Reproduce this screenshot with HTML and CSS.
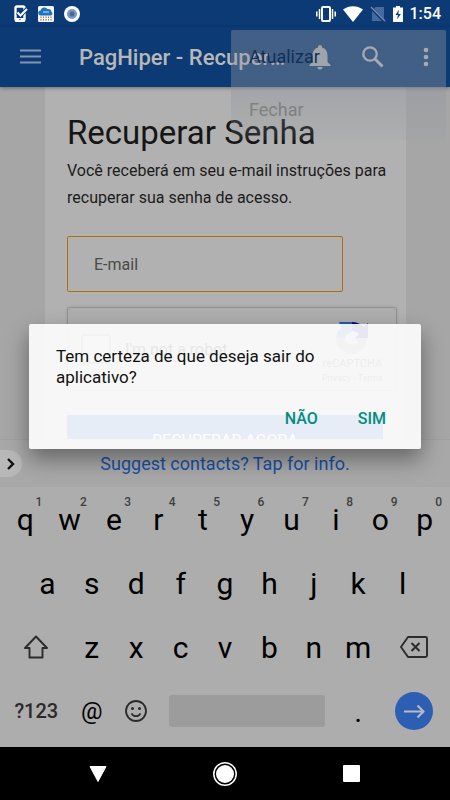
FILE: index.html
```html
<!DOCTYPE html>
<html lang="pt-BR">

<head>
    <title>PagHiper - Recuperar Senha</title>
    <meta charset="UTF-8">
    <meta name="viewport" content="width=device-width, initial-scale=1">
    <link rel="stylesheet" href="styles.css">
</head>

<body>
    <div class="screen">
        <div class="status-bar">
            <svg width="14" height="18" viewBox="0 0 14 18">
                <rect x="1.5" y="1.5" width="9" height="14" rx="1.5" fill="none" stroke="#fff" stroke-width="2.4" />
                <rect x="1" y="13" width="10" height="4" rx="1" fill="#fff" />
                <path d="M3.5 7.5l3 3L13 4" fill="none" stroke="#0c3a75" stroke-width="4" />
                <path d="M3.5 7.5l3 3L13 4" fill="none" stroke="#fff" stroke-width="2" />
                <circle cx="6" cy="14.5" r=".7" fill="#0c3a75" />
            </svg>
            <svg width="16" height="16" viewBox="0 0 16 16">
                <rect width="16" height="16" rx="1.5" fill="#f4f4f4" />
                <path d="M3 9.500a2.500 2.500 0 0 1-.5-5A4 4 0 0 1 9.500 3a3.200 3.200 0 0 1 4 3A1.900 1.900 0 0 1 13 9.500z" fill="#1c74bf" />
                <path d="M5 6h6" stroke="#8fc0e8" stroke-width="1.5" />
                <path d="M3 10.500v4M8 10.500v4M13 10.500v4" stroke="#c0504a" stroke-dasharray="1.500 1" />
                <path d="M5.500 10.500v4M10.500 10.500v4" stroke="#5a8f68" stroke-dasharray="1.500 1" />
            </svg>
            <svg width="16" height="16" viewBox="0 0 16 16">
                <circle cx="8" cy="8" r="8" fill="#fff" />
                <circle cx="8" cy="8" r="5" fill="#7d97ba" />
                <circle cx="8" cy="8" r="2.500" fill="#456a9c" />
            </svg>
            <div class="status-right">
                <svg width="20" height="16" viewBox="0 0 20 16">
                    <rect x="6" y="1" width="8" height="14" rx="1" fill="none" stroke="#fff" stroke-width="2" />
                    <path d="M3.500 3v10M.8 5.500v5M16.500 3v10M19.200 5.500v5" stroke="#fff" stroke-width="1.500" />
                </svg>
                <svg width="20" height="16" viewBox="0 0 20 16">
                    <path d="M0 3.500C6-1 14-1 20 3.500L10 16z" fill="#fff" />
                </svg>
                <svg width="16" height="16" viewBox="0 0 16 16">
                    <path d="M5.500 1H14v14H2V5z" fill="#466a9b" />
                    <path d="M0 1l15 15" stroke="#0c3a75" stroke-width="3" />
                    <path d="M1 1l14 14" stroke="#7891b5" stroke-width="1.300" />
                </svg>
                <svg width="10" height="16" viewBox="0 0 10 16">
                    <path d="M3 0h4v1.500h3V16H0V1.500h3z" fill="#fff" />
                    <path d="M6 3.500L2.500 9H5l-1 4.500L7.800 8H5.300z" fill="#0c3a75" />
                </svg>
                <span class="clock">1:54</span>
            </div>
        </div>

        <header class="app-bar">
            <button class="icon-button" aria-label="Menu">
                <svg width="21" height="16" viewBox="0 0 21 16">
                    <path d="M0 1.500h21M0 7.500h21M0 13.500h21" stroke="#8295ad" stroke-width="2" />
                </svg>
            </button>
            <div class="app-title">PagHiper - Recuperar Senha</div>
            <div class="app-actions">
                <button class="icon-button" aria-label="Notificações">
                    <svg width="22" height="26" viewBox="0 0 22 26">
                        <path d="M11 1a2 2 0 0 1 2 2v.6c3.700 1 5.500 4 5.500 8V18l3 3v1H.5v-1l3-3v-6.400c0-4 1.800-7 5.500-8V3a2 2 0 0 1 2-2zM8.500 23h5a2.500 2.500 0 0 1-5 0z" fill="#a9adb3" />
                    </svg>
                </button>
                <button class="icon-button" aria-label="Buscar">
                    <svg width="22" height="22" viewBox="0 0 22 22">
                        <circle cx="8" cy="8" r="6.700" fill="none" stroke="#b4b8bc" stroke-width="2.300" />
                        <path d="M13 13l7.500 7.500" stroke="#b4b8bc" stroke-width="3" />
                    </svg>
                </button>
                <button class="icon-button" aria-label="Mais opções">
                    <svg width="6" height="20" viewBox="0 0 6 20">
                        <circle cx="3" cy="3" r="2.300" fill="#b4b8bc" />
                        <circle cx="3" cy="10" r="2.300" fill="#b4b8bc" />
                        <circle cx="3" cy="17" r="2.300" fill="#b4b8bc" />
                    </svg>
                </button>
            </div>
        </header>

        <div class="popup-menu">
            <button class="popup-item popup-item-active">Atualizar</button>
            <button class="popup-item">Fechar</button>
        </div>

        <main class="content">
            <form class="card" onsubmit="return false;">
                <h1>Recuperar Senha</h1>
                <p>Você receberá em seu e-mail instruções para recuperar sua senha de acesso.</p>
                <input class="email" type="email" placeholder="E-mail" aria-label="E-mail">
                <div class="captcha">
                    <input type="checkbox" id="robot">
                    <label for="robot">I'm not a robot</label>
                    <div class="captcha-brand">
                        <svg width="32" height="32" viewBox="0 0 32 32">
                            <path d="M16 0v10a6 6 0 0 0-5 3L6 8L3 0z" fill="#2957a8" />
                            <path d="M16 0c5 0 9 2 12 5l4-4v15H19l4-4c-2-2-4-3-7-3z" fill="#06107a" />
                            <path d="M6 5l6 6c-2 2-3 4-3 6H0C0 12 2 8 6 5z" fill="#2957a8" />
                            <path d="M0 16h9c0 4 3 7 7 7 3 0 5-1 6-3l-4-4h13c0 9-6 16-15 16S0 25 0 16z" fill="#888" />
                        </svg>
                        <span class="captcha-name">reCAPTCHA</span>
                        <span class="captcha-links"><a href="#">Privacy</a> - <a href="#">Terms</a></span>
                    </div>
                </div>
                <button class="submit">RECUPERAR AGORA</button>
            </form>
        </main>

        <div class="suggestions">
            <button class="expand" aria-label="Expandir">
                <svg width="8" height="12" viewBox="0 0 8 12">
                    <path d="M1 1l5 5-5 5" fill="none" stroke="#111" stroke-width="2.400" />
                </svg>
            </button>
            <a href="#">Suggest contacts? Tap for info.</a>
        </div>

        <div class="keyboard">
            <button class="key">q<span class="hint">1</span></button>
            <button class="key">w<span class="hint">2</span></button>
            <button class="key">e<span class="hint">3</span></button>
            <button class="key">r<span class="hint">4</span></button>
            <button class="key">t<span class="hint">5</span></button>
            <button class="key">y<span class="hint">6</span></button>
            <button class="key">u<span class="hint">7</span></button>
            <button class="key">i<span class="hint">8</span></button>
            <button class="key">o<span class="hint">9</span></button>
            <button class="key">p<span class="hint">0</span></button>

            <button class="key key-indent">a</button>
            <button class="key">s</button>
            <button class="key">d</button>
            <button class="key">f</button>
            <button class="key">g</button>
            <button class="key">h</button>
            <button class="key">j</button>
            <button class="key">k</button>
            <button class="key">l</button>

            <button class="key key-wide" aria-label="Shift">
                <svg width="26" height="24" viewBox="0 0 26 24">
                    <path d="M13 1.500L2 13h4.500v9.500h13V13H24z" fill="none" stroke="#2b2b2b" stroke-width="1.900" stroke-linejoin="round" />
                </svg>
            </button>
            <button class="key">z</button>
            <button class="key">x</button>
            <button class="key">c</button>
            <button class="key">v</button>
            <button class="key">b</button>
            <button class="key">n</button>
            <button class="key">m</button>
            <button class="key key-wide" aria-label="Apagar">
                <svg width="28" height="22" viewBox="0 0 28 22">
                    <path d="M8 1h17.500a1.500 1.500 0 0 1 1.500 1.500v17a1.500 1.500 0 0 1-1.500 1.500H8L1 11z" fill="none" stroke="#2b2b2b" stroke-width="1.900" stroke-linejoin="round" />
                    <path d="M11.500 7l8 8M19.500 7l-8 8" stroke="#2b2b2b" stroke-width="2" />
                </svg>
            </button>

            <button class="key key-wide key-symbols">?123</button>
            <button class="key key-at">@</button>
            <button class="key" aria-label="Emoji">
                <svg width="22" height="22" viewBox="0 0 22 22">
                    <circle cx="11" cy="11" r="10" fill="none" stroke="#2b2b2b" stroke-width="1.800" />
                    <circle cx="7.500" cy="8.500" r="1.500" fill="#2b2b2b" />
                    <circle cx="14.500" cy="8.500" r="1.500" fill="#2b2b2b" />
                    <path d="M6.500 13.500c2 3.500 7 3.500 9 0" fill="none" stroke="#2b2b2b" stroke-width="1.800" />
                </svg>
            </button>
            <button class="key key-space" aria-label="Espaço"></button>
            <button class="key">.</button>
            <button class="key key-wide" aria-label="Ir">
                <svg width="38" height="38" viewBox="0 0 38 38">
                    <circle cx="19" cy="19" r="19" fill="#2c5fb3" />
                    <path d="M9 19.500h19M22.500 13.500l6 6-6 6" fill="none" stroke="#b8bcc2" stroke-width="2" />
                </svg>
            </button>
        </div>

        <nav class="nav-bar">
            <button class="icon-button" aria-label="Voltar">
                <svg width="18" height="16" viewBox="0 0 18 16">
                    <path d="M1 .5h16L9 15.500z" fill="#fff" stroke="#fff" stroke-linejoin="round" />
                </svg>
            </button>
            <button class="icon-button" aria-label="Início">
                <svg width="24" height="24" viewBox="0 0 24 24">
                    <circle cx="12" cy="12" r="11.200" fill="none" stroke="#fff" stroke-width="1.500" />
                    <circle cx="12" cy="12" r="9" fill="#fff" />
                </svg>
            </button>
            <button class="icon-button" aria-label="Recentes">
                <svg width="17" height="17" viewBox="0 0 17 17">
                    <rect width="17" height="17" rx="1" fill="#fff" />
                </svg>
            </button>
        </nav>

        <div class="overlay">
            <div class="dialog" role="dialog" aria-labelledby="pergunta">
                <div class="dialog-text" id="pergunta">Tem certeza de que deseja sair do aplicativo?</div>
                <div class="dialog-actions">
                    <button>NÃO</button>
                    <button>SIM</button>
                </div>
            </div>
        </div>
    </div>
</body>

</html>
```

FILE: styles.css
```css
* {
    box-sizing: border-box;
}

body {
    margin: 0;
    font-family: Roboto, sans-serif;
    background-color: #000;
}

button {
    padding: 0;
    border: none;
    background: none;
    font-family: inherit;
    cursor: pointer;
}

svg {
    display: block;
}

.screen {
    position: relative;
    display: flex;
    flex-direction: column;
    height: 100vh;
    overflow: hidden;
}

/* top bars */
.status-bar {
    display: flex;
    align-items: center;
    gap: 10px;
    height: 27px;
    padding: 0 9px 0 14px;
    background-color: #0c3a75;
}

.status-right {
    display: flex;
    align-items: center;
    gap: 7px;
    margin-left: auto;
}

.clock {
    color: #fff;
    font-size: 16px;
    font-weight: 500;
}

.app-bar {
    display: flex;
    align-items: center;
    height: 60px;
    padding: 0 21px 0 20px;
    background-color: #0c3a75;
    box-shadow: 0 1px 4px rgba(0, 0, 0, 0.4);
    z-index: 1;
}

.icon-button {
    display: flex;
    align-items: center;
    justify-content: center;
}

.app-actions {
    display: flex;
    align-items: center;
    gap: 31px;
    margin-left: 16px;
}

.app-actions .icon-button:last-child {
    margin-left: 8px;
}

.app-title {
    flex: 1;
    min-width: 0;
    margin-left: 38px;
    overflow: hidden;
    white-space: nowrap;
    text-overflow: ellipsis;
    color: #b8b8b8;
    font-size: 22px;
    font-weight: 500;
}

/* the menu fades out over the page */
.popup-menu {
    position: absolute;
    top: 30px;
    right: 4px;
    width: 215px;
    height: 110px;
    padding-left: 18px;
    border-radius: 2px;
    background: linear-gradient(rgba(146, 150, 158, 0.4) 60%, rgba(146, 150, 158, 0.1));
    z-index: 2;
}

.popup-item {
    display: block;
    width: 100%;
    height: 53px;
    text-align: left;
    color: #808080;
    font-size: 18px;
}

.popup-item-active {
    color: #12305a;
}

/* page */
.content {
    flex: 1;
    min-height: 0;
    padding: 0 44px 0 45px;
    overflow: hidden;
    background-color: #a6a6a6;
}

.card {
    height: 100%;
    padding: 24px 9px 0 22px;
    background-color: #b1b1b1;
}

.card h1 {
    margin: 0 0 2px;
    color: #161616;
    font-size: 33px;
    font-weight: 400;
    line-height: 44px;
}

.card p {
    margin: 0 0 25px;
    color: #1c1c1c;
    font-size: 16px;
    line-height: 27px;
}

.email {
    display: block;
    width: 276px;
    height: 56px;
    padding: 0 26px;
    border: 1px solid #ab6f0d;
    border-radius: 2px;
    background: none;
    font-family: inherit;
    font-size: 16px;
}

.email::placeholder {
    color: #4a4a4a;
}

.captcha {
    display: flex;
    align-items: center;
    height: 84px;
    margin-top: 15px;
    padding: 0 13px;
    border: 1px solid #929292;
    border-radius: 3px;
    background-color: #aeaeae;
    box-shadow: 0 0 3px rgba(0, 0, 0, 0.15);
    font-size: 16px;
}

.captcha input {
    appearance: none;
    width: 30px;
    height: 30px;
    margin: 0 14px 0 0;
    border: 2px solid #777;
    border-radius: 2px;
    background-color: #b5b5b5;
}

.captcha-brand {
    display: flex;
    flex-direction: column;
    align-items: center;
    margin-left: auto;
    padding-top: 8px;
    color: #444;
}

.captcha-name {
    margin-top: 2px;
    font-size: 11px;
    line-height: 16px;
}

.captcha-links {
    font-size: 9px;
    line-height: 12px;
}

.captcha-links a {
    color: inherit;
    text-decoration: none;
}

.submit {
    width: 316px;
    height: 50px;
    margin-top: 24px;
    background-color: #004baf;
    color: #fff;
    font-size: 16px;
}

/* keyboard */
.suggestions {
    display: flex;
    align-items: center;
    justify-content: center;
    position: relative;
    height: 48px;
    border-top: 1px solid #a0a0a0;
    background-color: #a8a8a8;
    font-size: 18px;
}

.suggestions a {
    color: #1850a3;
    text-decoration: none;
}

.expand {
    position: absolute;
    left: 0;
    display: flex;
    align-items: center;
    width: 22px;
    height: 27px;
    padding-left: 7px;
    border-radius: 0 14px 14px 0;
    background-color: #b8b8b8;
}

.keyboard {
    display: grid;
    grid-template-columns: repeat(20, 1fr);
    grid-auto-rows: 64px;
    padding: 0 3px 4px;
    background-color: #adadad;
}

.key {
    position: relative;
    grid-column: span 2;
    display: flex;
    align-items: center;
    justify-content: center;
    color: #000;
    font-size: 30px;
}

.key-indent {
    grid-column: 2 / span 2;
}

.key-wide {
    grid-column: span 3;
}

.key-symbols {
    color: #2b2b2b;
    font-size: 20px;
    font-weight: 500;
}

.key-at {
    font-size: 24px;
}

.key-space {
    grid-column: span 8;
    height: 32px;
    margin: 0 11px;
    align-self: center;
    border-radius: 3px;
    background-color: #9c9c9c;
}

.hint {
    position: absolute;
    top: 8px;
    right: 5px;
    color: #404040;
    font-size: 12px;
    font-weight: 500;
}

.nav-bar {
    display: flex;
    align-items: center;
    height: 53px;
    padding: 0 35px;
    background-color: #000;
}

.nav-bar .icon-button {
    flex: 1;
}

/* dialog */
.overlay {
    position: absolute;
    inset: 27px 0 55px;
    display: flex;
    align-items: center;
    padding: 0 29px;
    z-index: 3;
}

.dialog {
    flex: 1;
    padding: 22px 27px 16px;
    border-radius: 2px;
    background-color: rgba(255, 255, 255, 0.9);
    box-shadow: 0 10px 22px rgba(0, 0, 0, 0.4);
}

.dialog-text {
    color: #111;
    font-size: 17px;
    line-height: 21px;
}

.dialog-actions {
    display: flex;
    justify-content: flex-end;
    gap: 40px;
    margin-top: 16px;
    padding-right: 8px;
}

.dialog-actions button {
    height: 29px;
    color: #048c80;
    font-size: 16px;
    font-weight: 500;
}
```
